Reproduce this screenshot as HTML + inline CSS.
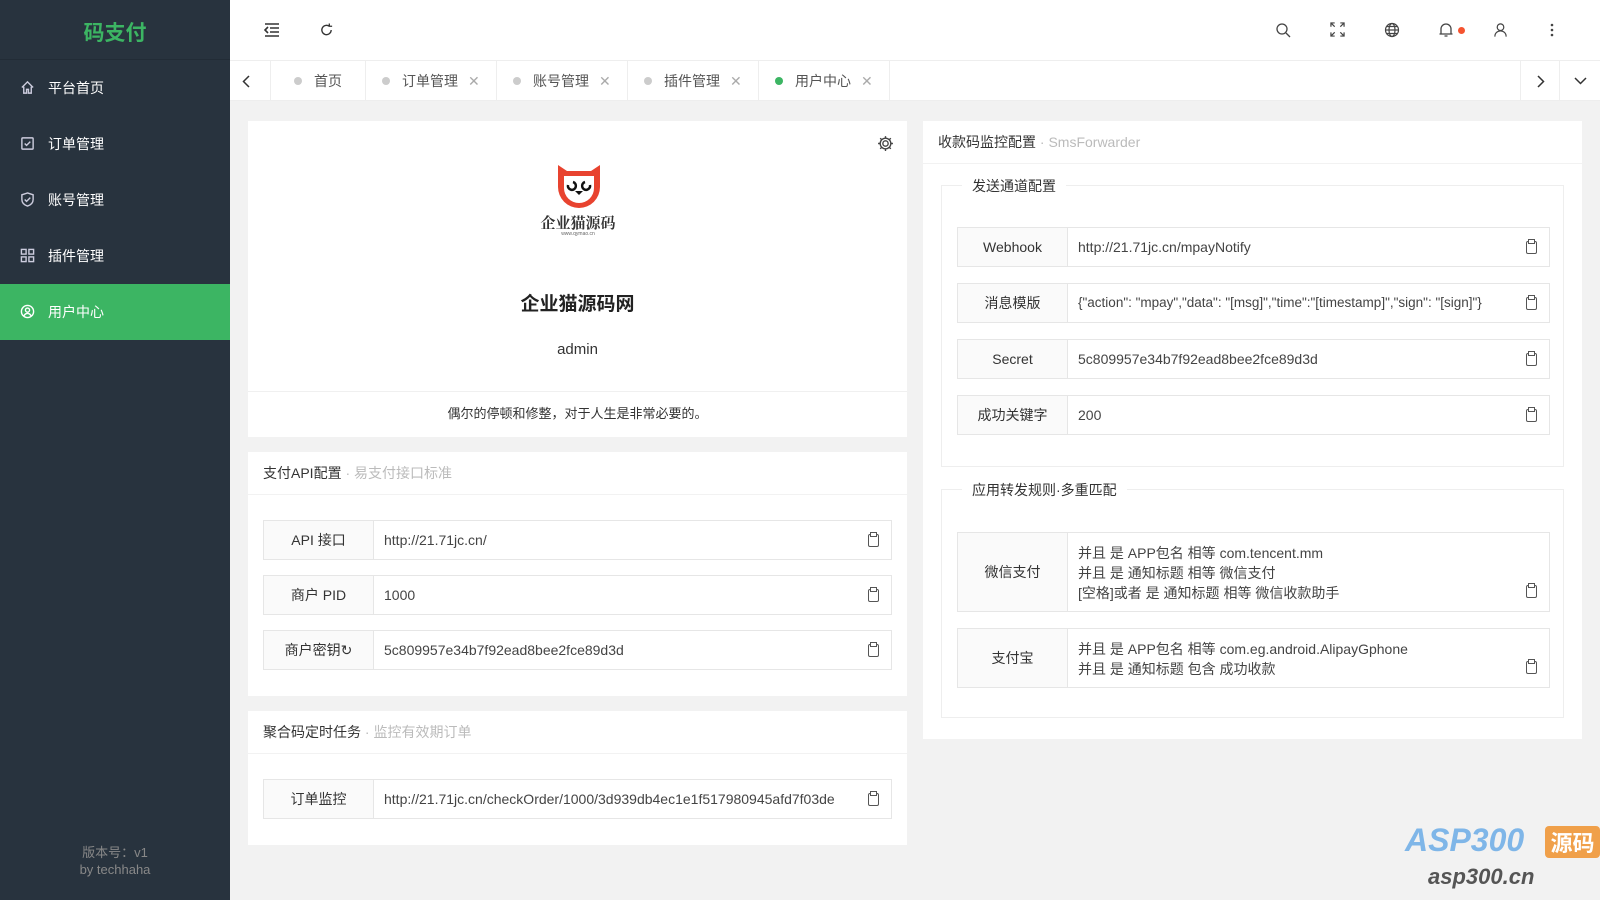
<!DOCTYPE html><html><head><meta charset="utf-8"><style>
*{box-sizing:border-box;margin:0;padding:0}
body{width:1600px;height:900px;overflow:hidden;font-family:"Liberation Sans","Noto Sans CJK SC",sans-serif;font-size:14px;color:#333;background:#f2f2f2;position:relative}
.side{position:absolute;left:0;top:0;width:230px;height:900px;background:#28333e}
.logo{height:60px;line-height:68px;text-align:center;color:#3cb563;font-size:21px;font-weight:bold;border-bottom:1px solid #222c36}
.mi{height:56px;line-height:56px;color:#fff;padding-left:48px;position:relative;font-size:14px}
.mi svg{position:absolute;left:20px;top:20px}
.mi.on{background:#3cb563}
.ver{position:absolute;bottom:22px;width:100%;text-align:center;color:#888;font-size:13px;line-height:17px}
.hd{position:absolute;left:230px;top:0;right:0;height:61px;background:#fff;border-bottom:1px solid #eee}
.hd svg{position:absolute;top:22px}
.tabs{position:absolute;left:230px;top:61px;right:0;height:40px;background:#fff;border-bottom:1px solid #eee}
.tab{position:absolute;top:0;height:40px;line-height:40px;border-right:1px solid #eee;color:#555;font-size:14px}
.tab b{display:inline-block;width:8px;height:8px;border-radius:50%;background:#ccc;margin-right:12px;vertical-align:1px}
.tab s{text-decoration:none;color:#aaa;margin-left:10px}
.card{position:absolute;background:#fff}
.ct{height:43px;line-height:43px;padding-left:15px;border-bottom:1px solid #f2f2f2;font-size:14px}
.ct span{color:#bbb}
.row{position:absolute;height:40px;border:1px solid #e6e6e6;display:flex}
.row .l{width:110px;background:#fafafa;border-right:1px solid #e6e6e6;text-align:center;line-height:38px}
.row .v{flex:1;padding-left:10px;line-height:38px;color:#444;position:relative}
.cp{position:absolute;right:12px;top:13px;width:11px;height:13px;border:1.5px solid #555;border-radius:2px}
.cp:after{content:"";position:absolute;left:1px;top:-3px;width:5px;height:3px;border:1.2px solid #555;background:#fff}
.fs{position:absolute;border:1px solid #eee}
.fs .lg{position:absolute;top:-10px;left:20px;background:#fff;padding:0 10px;font-size:14px}
.ml .v{line-height:20px;padding-top:10px}
</style></head><body>
<div class="side"><div class="logo">码支付</div>
<div class="mi"><svg width="15" height="15" viewBox="0 0 16 16" fill="none" stroke="#ccd" stroke-width="1.5"><path d="M2 8L8 2l6 6M4 7v7h3v-4h2v4h3V7"/></svg>平台首页</div>
<div class="mi"><svg width="15" height="15" viewBox="0 0 16 16" fill="none" stroke="#ccd" stroke-width="1.5"><rect x="2" y="2" width="12" height="12" rx="1"/><path d="M5 8l2 2 4-4"/></svg>订单管理</div>
<div class="mi"><svg width="15" height="15" viewBox="0 0 16 16" fill="none" stroke="#ccd" stroke-width="1.5"><path d="M8 1l6 2v5c0 4-3 6-6 7-3-1-6-3-6-7V3z"/><path d="M5 8l2 2 4-4"/></svg>账号管理</div>
<div class="mi"><svg width="15" height="15" viewBox="0 0 16 16" fill="none" stroke="#ccd" stroke-width="1.5"><rect x="1.5" y="1.5" width="5" height="5"/><rect x="9.5" y="1.5" width="5" height="5"/><rect x="1.5" y="9.5" width="5" height="5"/><rect x="9.5" y="9.5" width="5" height="5"/></svg>插件管理</div>
<div class="mi on"><svg width="15" height="15" viewBox="0 0 16 16" fill="none" stroke="#fff" stroke-width="1.5"><circle cx="8" cy="8" r="6.5"/><circle cx="8" cy="6.5" r="2.2"/><path d="M4 13c1-2 2.5-3 4-3s3 1 4 3"/></svg>用户中心</div>
<div class="ver">版本号：v1<br>by techhaha</div></div>
<div class="hd">
<svg style="left:34px" width="16" height="16" viewBox="0 0 16 16" stroke="#333" stroke-width="1.6" fill="none"><path d="M1 2h14M6 6h9M6 10h9M1 14h14M4 5L1 8l3 3"/></svg>
<svg style="left:89px" width="15" height="16" viewBox="0 0 16 16" stroke="#333" stroke-width="1.4" fill="none"><path d="M13 8a5 5 0 1 1-2-4M11 1v3h3"/></svg>
<svg style="left:1045px" width="16" height="16" viewBox="0 0 16 16" stroke="#444" stroke-width="1.3" fill="none"><circle cx="7" cy="7" r="5"/><path d="M11 11l4 4"/></svg>
<svg style="left:1100px" width="15" height="15" viewBox="0 0 16 16" stroke="#444" stroke-width="1.3" fill="none"><path d="M1 5V1h4M11 1h4v4M15 11v4h-4M5 15H1v-4M1 1l4 4M15 1l-4 4M15 15l-4-4M1 15l4-4"/></svg>
<svg style="left:1154px" width="16" height="16" viewBox="0 0 16 16" stroke="#444" stroke-width="1.2" fill="none"><circle cx="8" cy="8" r="6.5"/><ellipse cx="8" cy="8" rx="3" ry="6.5"/><path d="M1.5 8h13M2.5 4.5h11M2.5 11.5h11"/></svg>
<svg style="left:1208px" width="16" height="16" viewBox="0 0 16 16" stroke="#444" stroke-width="1.3" fill="none"><path d="M3 12V7a5 5 0 0 1 10 0v5zM1.5 12h13M6.5 14h3"/></svg>
<span style="position:absolute;left:1228px;top:27px;width:7px;height:7px;border-radius:50%;background:#f5532f"></span>
<svg style="left:1263px" width="15" height="16" viewBox="0 0 16 16" stroke="#444" stroke-width="1.3" fill="none"><circle cx="8" cy="5" r="3.5"/><path d="M2 15c0-4 3-6 6-6s6 2 6 6"/></svg>
<svg style="left:1320px" width="4" height="16" viewBox="0 0 4 16" fill="#444"><circle cx="2" cy="3" r="1.3"/><circle cx="2" cy="8" r="1.3"/><circle cx="2" cy="13" r="1.3"/></svg>
</div>
<div class="tabs">
<svg style="position:absolute;left:12px;top:14px" width="8" height="13" viewBox="0 0 8 13" stroke="#333" stroke-width="1.5" fill="none"><path d="M7 1L1.5 6.5 7 12"/></svg>
<div style="position:absolute;left:40px;top:0;height:40px;border-left:1px solid #eee"></div>
<div class="tab" style="left:40px;width:96px;padding-left:24px"><b></b>首页</div>
<div class="tab" style="left:136px;width:131px;padding-left:16px"><b></b>订单管理<s>✕</s></div>
<div class="tab" style="left:267px;width:131px;padding-left:16px"><b></b>账号管理<s>✕</s></div>
<div class="tab" style="left:398px;width:131px;padding-left:16px"><b></b>插件管理<s>✕</s></div>
<div class="tab" style="left:529px;width:131px;padding-left:16px"><b style="background:#3cb563"></b>用户中心<s>✕</s></div>
<div style="position:absolute;right:40px;top:0;width:40px;height:40px;border-left:1px solid #eee;border-right:1px solid #eee"><svg style="position:absolute;left:16px;top:14px" width="8" height="13" viewBox="0 0 8 13" stroke="#333" stroke-width="1.5" fill="none"><path d="M1 1l5.5 5.5L1 12"/></svg></div>
<svg style="position:absolute;right:13px;top:16px" width="13" height="8" viewBox="0 0 13 8" stroke="#333" stroke-width="1.5" fill="none"><path d="M1 1l5.5 5.5L12 1"/></svg></div>

<div class="card" style="left:248px;top:121px;width:659px;height:316px">
<svg style="position:absolute;right:13px;top:14px" width="17" height="17" viewBox="0 0 16 16" stroke="#444" stroke-width="1.3" fill="none"><circle cx="8" cy="8" r="2.5"/><path d="M8 1v2M8 13v2M1 8h2M13 8h2M3 3l1.5 1.5M11.5 11.5L13 13M3 13l1.5-1.5M11.5 4.5L13 3"/><circle cx="8" cy="8" r="5"/></svg>
<svg style="position:absolute;left:306px;top:42px" width="50" height="46" viewBox="0 0 50 46"><path d="M4 2l9 6h24l9-6v22a21 21 0 0 1-42 0z" fill="#e8432f"/><path d="M10 13h30v12a15 15 0 0 1-30 0z" fill="#fff"/><path d="M14 22a4 4 0 1 0 5-3" stroke="#111" stroke-width="2.5" fill="none"/><path d="M36 22a4 4 0 1 1-5-3" stroke="#111" stroke-width="2.5" fill="none"/><path d="M21 28h8l-4 4z" fill="#111"/></svg>
<div style="position:absolute;left:280px;top:91px;width:100px;text-align:center;font-family:'Noto Serif CJK SC',serif;font-size:15px;font-weight:bold;color:#333">企业猫源码</div>
<div style="position:absolute;left:280px;top:110px;width:100px;text-align:center;font-size:5px;color:#666">www.qymao.cn</div>
<div style="position:absolute;left:0;width:100%;top:168px;text-align:center;font-size:19px;font-weight:bold;color:#222">企业猫源码网</div>
<div style="position:absolute;left:0;width:100%;top:220px;text-align:center;font-size:15px">admin</div>
<div style="position:absolute;left:0;width:100%;top:270px;border-top:1px solid #f0f0f0;text-align:center;line-height:44px;font-size:13px">偶尔的停顿和修整，对于人生是非常必要的。</div></div>

<div class="card" style="left:248px;top:452px;width:659px;height:244px"><div class="ct">支付API配置 <span>· 易支付接口标准</span></div>
<div class="row" style="left:15px;top:68px;width:629px"><div class="l">API 接口</div><div class="v">http://21.71jc.cn/<i class="cp"></i></div></div>
<div class="row" style="left:15px;top:123px;width:629px"><div class="l">商户 PID</div><div class="v">1000<i class="cp"></i></div></div>
<div class="row" style="left:15px;top:178px;width:629px"><div class="l">商户密钥↻</div><div class="v">5c809957e34b7f92ead8bee2fce89d3d<i class="cp"></i></div></div></div>

<div class="card" style="left:248px;top:711px;width:659px;height:134px"><div class="ct">聚合码定时任务 <span>· 监控有效期订单</span></div>
<div class="row" style="left:15px;top:68px;width:629px"><div class="l">订单监控</div><div class="v">http://21.71jc.cn/checkOrder/1000/3d939db4ec1e1f517980945afd7f03de<i class="cp"></i></div></div></div>

<div class="card" style="left:923px;top:121px;width:659px;height:618px"><div class="ct">收款码监控配置 <span>· SmsForwarder</span></div>
<div class="fs" style="left:18px;top:64px;width:623px;height:282px"><div class="lg">发送通道配置</div>
<div class="row" style="left:15px;top:41px;width:593px"><div class="l">Webhook</div><div class="v">http://21.71jc.cn/mpayNotify<i class="cp"></i></div></div>
<div class="row" style="left:15px;top:97px;width:593px"><div class="l">消息模版</div><div class="v" style="font-size:13.5px">{"action": "mpay","data": "[msg]","time":"[timestamp]","sign": "[sign]"}<i class="cp"></i></div></div>
<div class="row" style="left:15px;top:153px;width:593px"><div class="l">Secret</div><div class="v">5c809957e34b7f92ead8bee2fce89d3d<i class="cp"></i></div></div>
<div class="row" style="left:15px;top:209px;width:593px"><div class="l">成功关键字</div><div class="v">200<i class="cp"></i></div></div></div>
<div class="fs" style="left:18px;top:368px;width:623px;height:229px"><div class="lg">应用转发规则·多重匹配</div>
<div class="row ml" style="left:15px;top:42px;width:593px;height:80px"><div class="l" style="line-height:78px">微信支付</div><div class="v">并且 是 APP包名 相等 com.tencent.mm<br>并且 是 通知标题 相等 微信支付<br>[空格]或者 是 通知标题 相等 微信收款助手<i class="cp" style="top:52px"></i></div></div>
<div class="row ml" style="left:15px;top:138px;width:593px;height:60px"><div class="l" style="line-height:58px">支付宝</div><div class="v">并且 是 APP包名 相等 com.eg.android.AlipayGphone<br>并且 是 通知标题 包含 成功收款<i class="cp" style="top:32px"></i></div></div></div></div>

<div style="position:absolute;left:1405px;top:822px;font-size:32px;font-weight:bold;font-style:italic;color:#7fb6e8">ASP300</div>
<div style="position:absolute;left:1545px;top:826px;width:55px;height:32px;background:#f0a04a;color:#fff;font-size:22px;font-weight:bold;text-align:center;border-radius:4px">源码</div>
<div style="position:absolute;left:1428px;top:864px;font-size:22px;font-weight:bold;font-style:italic;color:#555">asp300.cn</div>
</body></html>
